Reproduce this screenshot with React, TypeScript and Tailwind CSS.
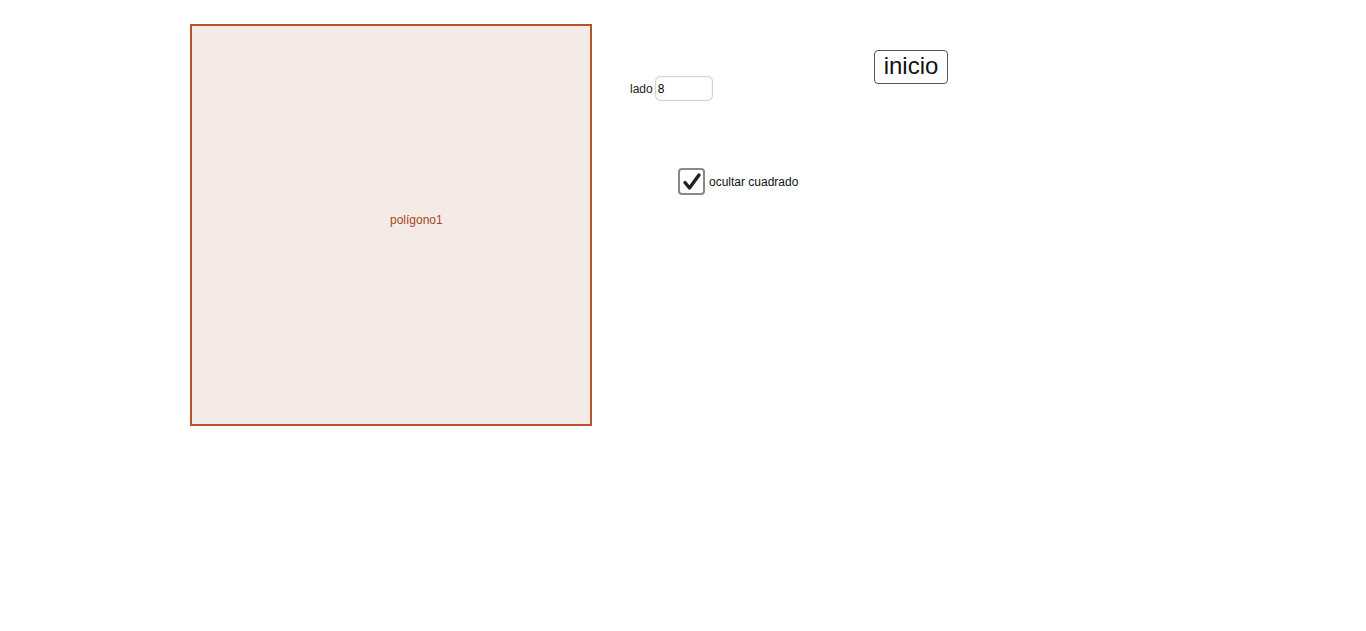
export default function App() {
  return (
    <div
      className="relative w-[1366px] h-[631px] bg-white overflow-hidden"
      style={{ fontFamily: '"Liberation Sans", Arial, sans-serif' }}
    >
      {/* polygon */}
      <div className="absolute left-[190px] top-[24px] w-[402px] h-[402px] border-2 border-[#b5532a] bg-[#f4ebe6]" />
      <div className="absolute left-[390px] top-[212px] text-[12px] text-[#a4461e] leading-[16px]">
        polígono1
      </div>

      {/* lado input */}
      <div className="absolute left-[630px] top-[76px] h-[25px] flex items-center gap-[2px]">
        <span className="text-[12px] text-[#222]">lado</span>
        <div className="w-[58px] h-[25px] rounded-[5px] border border-[#d6d3cf] shadow-[inset_0_0_1px_#bbb] flex items-center px-[2px] text-[12px] text-black bg-white">
          8
        </div>
      </div>

      {/* inicio button */}
      <div className="absolute left-[874px] top-[50px] w-[74px] h-[34px] rounded-[4px] border border-[#555] flex items-center justify-center text-[24px] text-[#111] bg-white leading-none pb-[2px]">
        inicio
      </div>

      {/* checkbox */}
      <div className="absolute left-[678px] top-[168px] flex items-center gap-[4px]">
        <div className="w-[27px] h-[27px] rounded-[4px] border-2 border-[#888] flex items-center justify-center bg-white">
          <svg width="20" height="20" viewBox="0 0 20 20">
            <path d="M3 10.5 L7.5 16 L17 3" fill="none" stroke="#222" strokeWidth="3.4" strokeLinecap="round" strokeLinejoin="round" />
          </svg>
        </div>
        <span className="text-[12px] text-[#111]">ocultar cuadrado</span>
      </div>
    </div>
  );
}
